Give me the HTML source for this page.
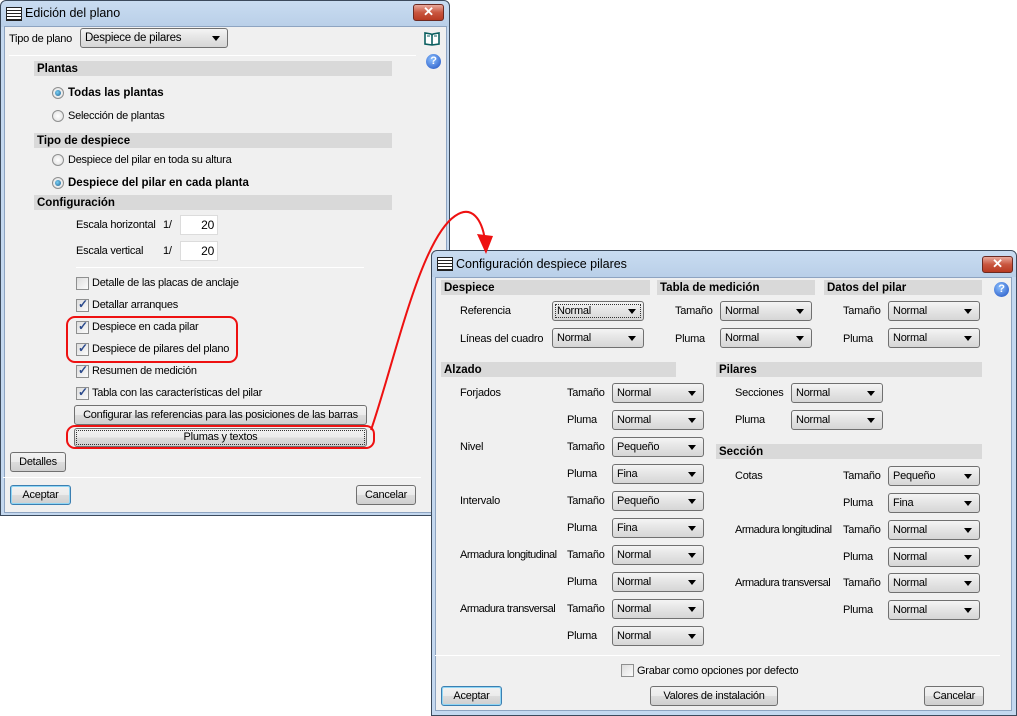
<!DOCTYPE html>
<html><head><meta charset="utf-8"><style>
*{box-sizing:border-box;margin:0;padding:0}
body{width:1017px;height:716px;background:#fff;position:relative;overflow:hidden;font-family:"Liberation Sans",sans-serif;font-size:11px;color:#000;letter-spacing:-0.25px}
.a{position:absolute}
.win{position:absolute;border:1px solid #3c4a5c;border-radius:6px 6px 0 0;background:linear-gradient(#c9dcf1,#b9cfe8 26px,#c4d8ef 26px);}
.cl{position:absolute;background:#f0f0f0;border:1px solid #8ea4c1}
.ttl{position:absolute;font-size:12.5px;color:#000;letter-spacing:0}
.x{position:absolute;width:31px;height:17px;border:1px solid #6b2a22;border-radius:3px;background:linear-gradient(#e9a99c,#c9563f 50%,#b83a22);color:#fff;font-weight:bold;font-size:13px;text-align:center;line-height:14px}
.hd{position:absolute;background:#d9d9d9;font-weight:bold;font-size:11.5px;padding-left:3px;height:15px;line-height:16px;letter-spacing:0}
.t{position:absolute;height:14px;line-height:15px;white-space:nowrap}
.cb{position:absolute;height:20px;border:1px solid #707070;border-radius:3px;background:linear-gradient(#f4f4f4,#e4e4e4 50%,#d6d6d6);padding-left:4px;line-height:18px}
.cb:after{content:"";position:absolute;right:7px;top:7px;border-left:4px solid transparent;border-right:4px solid transparent;border-top:5px solid #000}
.bt{position:absolute;height:20px;border:1px solid #707070;border-radius:3px;background:linear-gradient(#f2f2f2,#ebebeb 50%,#dddddd 50%,#cfcfcf);text-align:center;line-height:18px}
.bt.d{border-color:#3c7fb1;box-shadow:inset 0 0 0 1px #8fd6f5}
.ck{position:absolute;width:13px;height:13px;border:1px solid #8e8f8f;background:linear-gradient(135deg,#ddd,#fbfbfb)}
.ck.on:after{content:"✓";position:absolute;left:1px;top:-3px;font-size:12px;color:#2b4a8c;font-weight:bold}
.rd{position:absolute;width:12px;height:12px;border-radius:50%;border:1px solid #8e8f8f;background:radial-gradient(#fff,#ddd)}
.rd.on:after{content:"";position:absolute;left:2px;top:2px;width:6px;height:6px;border-radius:50%;background:radial-gradient(circle at 40% 40%,#7ad0f5,#1d5f8f)}
.sep{position:absolute;height:1px;background:#a0a0a0;border-bottom:1px solid #fff}
.inp{position:absolute;height:20px;background:#fff;border:1px solid #dcdcdc;text-align:right;padding-right:3px;line-height:18px;font-size:12px}
.help{position:absolute;width:15px;height:15px;border-radius:50%;background:radial-gradient(circle at 40% 35%,#8cc0ff,#1d4fc0);color:#fff;font-weight:bold;font-size:11px;text-align:center;line-height:15px}
.ico{position:absolute;width:16px;height:14px;border:1px solid #222;background:repeating-linear-gradient(#fff 0 2px,#222 2px 3px)}
</style></head><body>

<div class="win" style="left:0;top:0;width:450px;height:516px">
<div class="ico" style="left:5px;top:6px"></div>
<div class="ttl" style="left:24px;top:5px">Edición del plano</div>
<div class="x" style="left:412px;top:3px">✕</div>
<div class="cl" style="left:3px;top:25px;width:443px;height:487px"></div>
</div>
<div class="t" style="left:9px;top:32px">Tipo de plano</div>
<div class="cb" style="left:80px;top:28px;width:148px;font-size:11.5px">Despiece de pilares</div>
<div class="sep" style="left:9px;top:55px;width:407px"></div>
<svg class="a" style="left:424px;top:31px" width="18" height="16"><path d="M1,2 L1,13 L8,14 L15,13 L15,2 L9,3 L8,4 L7,3 Z M8,4 L8,14" fill="#fff" stroke="#0b5f60" stroke-width="1.6"/><path d="M3,5 L6,5 M10,5 L13,5" stroke="#0b5f60"/></svg>
<div class="help" style="left:426px;top:54px">?</div>
<div class="hd" style="left:34px;top:61px;width:358px">Plantas</div>
<div class="rd on" style="left:52px;top:87px"></div><div class="t" style="left:68px;top:86px;font-weight:bold;font-size:11.5px;letter-spacing:0">Todas las plantas</div>
<div class="rd" style="left:52px;top:110px"></div><div class="t" style="left:68px;top:109px">Selección de plantas</div>
<div class="hd" style="left:34px;top:133px;width:358px">Tipo de despiece</div>
<div class="rd" style="left:52px;top:154px"></div><div class="t" style="left:68px;top:153px">Despiece del pilar en toda su altura</div>
<div class="rd on" style="left:52px;top:177px"></div><div class="t" style="left:68px;top:176px;font-weight:bold;font-size:11.5px;letter-spacing:0">Despiece del pilar en cada planta</div>
<div class="hd" style="left:34px;top:195px;width:358px">Configuración</div>
<div class="t" style="left:76px;top:218px">Escala horizontal</div><div class="t" style="left:163px;top:218px">1/</div><div class="inp" style="left:180px;top:215px;width:38px">20</div>
<div class="t" style="left:76px;top:244px">Escala vertical</div><div class="t" style="left:163px;top:244px">1/</div><div class="inp" style="left:180px;top:241px;width:38px">20</div>
<div class="sep" style="left:76px;top:267px;width:288px"></div>
<div class="ck" style="left:76px;top:277px"></div><div class="t" style="left:92px;top:276px">Detalle de las placas de anclaje</div>
<div class="ck on" style="left:76px;top:299px"></div><div class="t" style="left:92px;top:298px">Detallar arranques</div>
<div class="ck on" style="left:76px;top:321px"></div><div class="t" style="left:92px;top:320px">Despiece en cada pilar</div>
<div class="ck on" style="left:76px;top:343px"></div><div class="t" style="left:92px;top:342px">Despiece de pilares del plano</div>
<div class="ck on" style="left:76px;top:365px"></div><div class="t" style="left:92px;top:364px">Resumen de medición</div>
<div class="ck on" style="left:76px;top:387px"></div><div class="t" style="left:92px;top:386px">Tabla con las características del pilar</div>
<div class="bt" style="left:74px;top:405px;width:293px">Configurar las referencias para las posiciones de las barras</div>
<div class="bt" style="left:74px;top:428px;width:293px;height:19px;line-height:17px;outline:1px dotted #333;outline-offset:-3px">Plumas y textos</div>
<div class="bt" style="left:10px;top:452px;width:56px">Detalles</div>
<div class="sep" style="left:3px;top:477px;width:418px"></div>
<div class="bt d" style="left:10px;top:485px;width:61px">Aceptar</div>
<div class="bt" style="left:356px;top:485px;width:60px">Cancelar</div>

<div class="win" style="left:431px;top:250px;width:586px;height:466px">
<div class="ico" style="left:5px;top:6px"></div>
<div class="ttl" style="left:24px;top:6px">Configuración despiece pilares</div>
<div class="x" style="left:550px;top:5px">✕</div>
<div class="cl" style="left:3px;top:26px;width:577px;height:434px"></div>
</div>
<div class="help" style="left:994px;top:282px">?</div>
<div class="hd" style="left:441px;top:280px;width:209px">Despiece</div>
<div class="hd" style="left:657px;top:280px;width:158px">Tabla de medición</div>
<div class="hd" style="left:824px;top:280px;width:158px">Datos del pilar</div>
<div class="t" style="left:460px;top:304px">Referencia</div><div class="cb" style="left:552px;top:301px;width:92px;outline:1px dotted #333;outline-offset:-4px">Normal</div>
<div class="t" style="left:460px;top:332px">Líneas del cuadro</div><div class="cb" style="left:552px;top:328px;width:92px">Normal</div>
<div class="t" style="left:675px;top:304px">Tamaño</div><div class="cb" style="left:720px;top:301px;width:92px">Normal</div>
<div class="t" style="left:675px;top:332px">Pluma</div><div class="cb" style="left:720px;top:328px;width:92px">Normal</div>
<div class="t" style="left:843px;top:304px">Tamaño</div><div class="cb" style="left:888px;top:301px;width:92px">Normal</div>
<div class="t" style="left:843px;top:332px">Pluma</div><div class="cb" style="left:888px;top:328px;width:92px">Normal</div>
<div class="hd" style="left:441px;top:362px;width:235px">Alzado</div>
<div class="hd" style="left:716px;top:362px;width:266px">Pilares</div>

<div class="t" style="left:460px;top:386px">Forjados</div>
<div class="t" style="left:460px;top:440px">Nivel</div>
<div class="t" style="left:460px;top:494px">Intervalo</div>
<div class="t" style="left:460px;top:548px;letter-spacing:-0.5px">Armadura longitudinal</div>
<div class="t" style="left:460px;top:602px;letter-spacing:-0.5px">Armadura transversal</div>
<div class="t" style="left:567px;top:386px">Tamaño</div><div class="cb" style="left:612px;top:383px;width:92px">Normal</div>
<div class="t" style="left:567px;top:413px">Pluma</div><div class="cb" style="left:612px;top:410px;width:92px">Normal</div>
<div class="t" style="left:567px;top:440px">Tamaño</div><div class="cb" style="left:612px;top:437px;width:92px">Pequeño</div>
<div class="t" style="left:567px;top:467px">Pluma</div><div class="cb" style="left:612px;top:464px;width:92px">Fina</div>
<div class="t" style="left:567px;top:494px">Tamaño</div><div class="cb" style="left:612px;top:491px;width:92px">Pequeño</div>
<div class="t" style="left:567px;top:521px">Pluma</div><div class="cb" style="left:612px;top:518px;width:92px">Fina</div>
<div class="t" style="left:567px;top:548px">Tamaño</div><div class="cb" style="left:612px;top:545px;width:92px">Normal</div>
<div class="t" style="left:567px;top:575px">Pluma</div><div class="cb" style="left:612px;top:572px;width:92px">Normal</div>
<div class="t" style="left:567px;top:602px">Tamaño</div><div class="cb" style="left:612px;top:599px;width:92px">Normal</div>
<div class="t" style="left:567px;top:629px">Pluma</div><div class="cb" style="left:612px;top:626px;width:92px">Normal</div>

<div class="t" style="left:735px;top:386px">Secciones</div><div class="cb" style="left:791px;top:383px;width:92px">Normal</div>
<div class="t" style="left:735px;top:413px">Pluma</div><div class="cb" style="left:791px;top:410px;width:92px">Normal</div>
<div class="hd" style="left:716px;top:444px;width:266px">Sección</div>
<div class="t" style="left:735px;top:469px">Cotas</div>
<div class="t" style="left:735px;top:523px;letter-spacing:-0.5px">Armadura longitudinal</div>
<div class="t" style="left:735px;top:576px;letter-spacing:-0.5px">Armadura transversal</div>
<div class="t" style="left:843px;top:469px">Tamaño</div><div class="cb" style="left:888px;top:466px;width:92px">Pequeño</div>
<div class="t" style="left:843px;top:496px">Pluma</div><div class="cb" style="left:888px;top:493px;width:92px">Fina</div>
<div class="t" style="left:843px;top:523px">Tamaño</div><div class="cb" style="left:888px;top:520px;width:92px">Normal</div>
<div class="t" style="left:843px;top:550px">Pluma</div><div class="cb" style="left:888px;top:547px;width:92px">Normal</div>
<div class="t" style="left:843px;top:576px">Tamaño</div><div class="cb" style="left:888px;top:573px;width:92px">Normal</div>
<div class="t" style="left:843px;top:603px">Pluma</div><div class="cb" style="left:888px;top:600px;width:92px">Normal</div>

<div class="sep" style="left:435px;top:655px;width:565px"></div>
<div class="ck" style="left:621px;top:664px"></div><div class="t" style="left:637px;top:664px">Grabar como opciones por defecto</div>
<div class="bt d" style="left:441px;top:686px;width:61px">Aceptar</div>
<div class="bt" style="left:650px;top:686px;width:128px">Valores de instalación</div>
<div class="bt" style="left:924px;top:686px;width:60px">Cancelar</div>

<svg class="a" style="left:0;top:0" width="1017" height="716">
<rect x="67" y="317" width="170" height="45" rx="8" fill="none" stroke="#ee1111" stroke-width="2"/>
<rect x="67" y="426" width="307" height="22" rx="8" fill="none" stroke="#ee1111" stroke-width="2"/>
<path d="M371,430 C395,360 420,240 455,216 C472,204 482,220 485,240" fill="none" stroke="#ee1111" stroke-width="2"/>
<path d="M477,234 L493,236 L486,254 Z" fill="#ee1111"/>
</svg>
</body></html>
